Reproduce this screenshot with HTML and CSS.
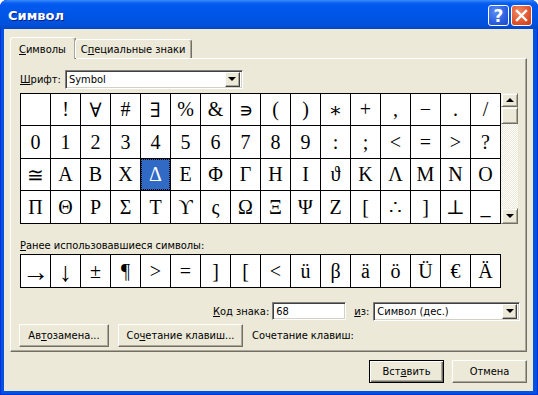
FILE: index.html
```html
<!DOCTYPE html>
<html lang="ru">
<head>
  <meta charset="UTF-8" />
  <title>Символ</title>
  <link rel="stylesheet" href="styles.css">
</head>
<body>
  <div class="window">
    <div class="titlebar">
      <span class="title">Символ</span>
      <div class="tb-buttons">
        <span class="tb-btn help">?</span>
        <span class="tb-btn close">
          <svg width="13" height="13" viewBox="0 0 13 13"><path d="M2 2 L11 11 M11 2 L2 11" stroke="#fff" stroke-width="2.4" stroke-linecap="square"/></svg>
        </span>
      </div>
    </div>

    <div class="dlg-body">
      <div class="tabs">
        <div class="tab active"><u>С</u>имволы</div>
        <div class="tab">С<u>п</u>ециальные знаки</div>
      </div>

      <div class="panel">
        <div class="font-row">
          <span class="lbl"><u>Ш</u>рифт:</span>
          <div class="combo font-combo">
            <span class="combo-text">Symbol</span>
            <span class="drop"><span class="tri-down"></span></span>
          </div>
        </div>

        <div class="chart">
          <div class="grid" id="grid"></div>
          <div class="scrollbar">
            <div class="sb-btn"><span class="tri-up"></span></div>
            <div class="sb-thumb"></div>
            <div class="sb-track"></div>
            <div class="sb-btn sb-down"><span class="tri-down"></span></div>
          </div>
        </div>

        <div class="recent-label"><u>Р</u>анее использовавшиеся символы:</div>
        <div class="recent" id="recent"></div>

        <div class="code-row">
          <span class="lbl"><u>К</u>од знака:</span>
          <div class="field code-field">68</div>
          <span class="lbl from-lbl"><u>и</u>з:</span>
          <div class="combo from-combo">
            <span class="combo-text">Символ (дес.)</span>
            <span class="drop"><span class="tri-down"></span></span>
          </div>
        </div>

        <div class="btn-row">
          <div class="btn btn-auto">Ав<u>т</u>озамена...</div>
          <div class="btn btn-keys">Со<u>ч</u>етание клавиш...</div>
          <span class="lbl keys-lbl">Сочетание клавиш:</span>
        </div>
      </div>

      <div class="footer">
        <div class="btn btn-main default">Вст<u>а</u>вить</div>
        <div class="btn btn-main">Отмена</div>
      </div>
    </div>
  </div>

  <script>
    const chars = [
      ' ', '!', '∀', '#', '∃', '%', '&', '∍', '(', ')', '∗', '+', ',', '−', '.', '/',
      '0', '1', '2', '3', '4', '5', '6', '7', '8', '9', ':', ';', '<', '=', '>', '?',
      '≅', 'Α', 'Β', 'Χ', 'Δ', 'Ε', 'Φ', 'Γ', 'Η', 'Ι', 'ϑ', 'Κ', 'Λ', 'Μ', 'Ν', 'Ο',
      'Π', 'Θ', 'Ρ', 'Σ', 'Τ', 'ϒ', 'ς', 'Ω', 'Ξ', 'Ψ', 'Ζ', '[', '∴', ']', '⊥', '_'
    ];
    const recentChars = ['→', '↓', '±', '¶', '>', '=', ']', '[', '<', 'ü', 'β', 'ä', 'ö', 'Ü', '€', 'Ä'];

    const grid = document.getElementById('grid');
    chars.forEach((c, i) => {
      const cell = document.createElement('div');
      cell.className = 'cell' + (i === 36 ? ' selected' : '');
      cell.textContent = c;
      grid.appendChild(cell);
    });

    const recent = document.getElementById('recent');
    recentChars.forEach(c => {
      const cell = document.createElement('div');
      cell.className = 'cell' + (c === '→' || c === '↓' ? ' arrow' : '');
      cell.textContent = c;
      recent.appendChild(cell);
    });
  </script>
</body>
</html>
```

FILE: styles.css
```css
body {
  margin: 0;
  background: #ffffff;
  font-family: "DejaVu Sans Condensed", "Liberation Sans", sans-serif;
  font-size: 11px;
  color: #000;
}

u {
  text-decoration: underline;
  text-underline-offset: 1px;
}

.window {
  width: 538px;
  height: 395px;
  background: #0053e1;
  border-radius: 7px 7px 0 0;
  box-shadow: inset 0 0 0 1px #0831d9;
  display: flex;
  flex-direction: column;
  box-sizing: border-box;
  overflow: hidden;
}

.titlebar {
  height: 29px;
  flex: none;
  display: flex;
  align-items: center;
  justify-content: space-between;
  padding: 0 6px 0 8px;
  background: linear-gradient(#3b8cfb 0, #0a5ff0 3px, #0058ee 6px, #0055e5 55%, #0050da 85%, #0046c8 100%);
  border-radius: 7px 7px 0 0;
}

.title {
  color: #fff;
  font-family: "DejaVu Sans", sans-serif;
  font-weight: bold;
  font-size: 13px;
  text-shadow: 1px 1px 0 #0a1e8c;
  padding-top: 1px;
}

.tb-buttons {
  display: flex;
  gap: 2px;
  padding-top: 2px;
}

.tb-btn {
  width: 21px;
  height: 21px;
  box-sizing: border-box;
  border: 1px solid #fff;
  border-radius: 3px;
  display: flex;
  align-items: center;
  justify-content: center;
  color: #fff;
}

.help {
  background: radial-gradient(circle at 35% 30%, #5d8cf5, #2a5fe0 60%, #1b47c7);
  font-family: "DejaVu Sans", sans-serif;
  font-size: 17px;
  font-weight: bold;
}

.close {
  background: radial-gradient(circle at 35% 30%, #f08a63, #e0542d 60%, #c63b16);
}

.dlg-body {
  flex: 1;
  margin: 0 5px 4px 4px;
  background: #ece9d8;
  display: flex;
  flex-direction: column;
}

.tabs {
  display: flex;
  align-items: flex-end;
  padding: 8px 0 0 7px;
  height: 21px;
  position: relative;
  z-index: 1;
}

.tab {
  height: 19px;
  box-sizing: border-box;
  padding: 3px 6px 0 5px;
  background: #ece9d8;
  border-top: 1px solid #fff;
  border-left: 1px solid #fff;
  border-right: 1px solid #716f64;
  box-shadow: inset -1px 0 0 #aca899;
  border-radius: 3px 3px 0 0;
}

.tab.active {
  height: 22px;
  padding: 5px 9px 0 8px;
  margin-right: -1px;
  margin-left: -1px;
  margin-bottom: -1px;
}

.panel {
  margin: 0 6px;
  height: 294px;
  box-sizing: border-box;
  border-top: 1px solid #fff;
  border-left: 1px solid #fff;
  border-right: 1px solid #716f64;
  border-bottom: 1px solid #716f64;
  box-shadow: inset -1px -1px 0 #aca899;
  padding: 10px 0 0 9px;
}

.lbl {
  white-space: nowrap;
}

.font-row {
  display: flex;
  align-items: center;
  gap: 4px;
  height: 20px;
}

.combo {
  height: 19px;
  box-sizing: border-box;
  background: #fff;
  border-top: 1px solid #808080;
  border-left: 1px solid #808080;
  border-right: 1px solid #fff;
  border-bottom: 1px solid #fff;
  box-shadow: inset 1px 1px 0 #404040, inset -1px -1px 0 #d4d0c8;
  display: flex;
  align-items: center;
  padding: 0 2px 0 3px;
}

.combo-text {
  flex: 1;
}

.font-combo {
  width: 178px;
}

.drop {
  width: 15px;
  height: 15px;
  box-sizing: border-box;
  background: #ece9d8;
  border-top: 1px solid #fff;
  border-left: 1px solid #fff;
  border-right: 1px solid #404040;
  border-bottom: 1px solid #404040;
  box-shadow: inset -1px -1px 0 #aca899;
  display: flex;
  align-items: center;
  justify-content: center;
}

.tri-down {
  width: 0;
  height: 0;
  border-left: 4px solid transparent;
  border-right: 4px solid transparent;
  border-top: 4px solid #000;
}

.tri-up {
  width: 0;
  height: 0;
  border-left: 4px solid transparent;
  border-right: 4px solid transparent;
  border-bottom: 4px solid #000;
}

.chart {
  display: flex;
  margin-top: 4px;
}

.grid,
.recent {
  display: grid;
  grid-template-columns: repeat(16, 29px);
  column-gap: 1px;
  row-gap: 1px;
  background: #000;
  border: 1px solid #000;
  width: fit-content;
  font-family: "Liberation Serif", "DejaVu Serif", serif;
  font-size: 20px;
}

.grid {
  grid-template-rows: 31px 32px 31px 32px;
}

.recent {
  grid-template-rows: 32px;
}

.cell {
  background: #fff;
  display: flex;
  align-items: center;
  justify-content: center;
  overflow: hidden;
}

.cell.arrow {
  font-family: "Liberation Serif", "DejaVu Serif", serif;
  font-size: 27px;
  padding-top: 3px;
}

.cell.selected {
  background: #316ac5;
  color: #fff;
  outline: 1px dotted #000;
  outline-offset: -1px;
}

.scrollbar {
  width: 17px;
  display: flex;
  flex-direction: column;
  height: 131px;
}

.sb-btn,
.sb-thumb {
  box-sizing: border-box;
  background: #ece9d8;
  border-top: 1px solid #f1efe2;
  border-left: 1px solid #f1efe2;
  border-right: 1px solid #716f64;
  border-bottom: 1px solid #716f64;
  box-shadow: inset 1px 1px 0 #fff, inset -1px -1px 0 #aca899;
  display: flex;
  align-items: center;
  justify-content: center;
}

.sb-btn {
  height: 14px;
}

.sb-down {
  height: 16px;
}

.sb-thumb {
  height: 17px;
}

.sb-track {
  flex: 1;
  background: repeating-conic-gradient(#fff 0 25%, #ece9d8 0 50%) 0 0 / 2px 2px;
}

.recent-label {
  margin-top: 15px;
  height: 13px;
}

.recent {
  margin-top: 2px;
}

.code-row {
  display: flex;
  align-items: center;
  margin-top: 14px;
  padding-left: 193px;
  height: 18px;
}

.field {
  height: 18px;
  box-sizing: border-box;
  background: #fff;
  border-top: 1px solid #808080;
  border-left: 1px solid #808080;
  border-right: 1px solid #fff;
  border-bottom: 1px solid #fff;
  box-shadow: inset 1px 1px 0 #404040, inset -1px -1px 0 #d4d0c8;
  padding: 2px 3px;
}

.code-field {
  width: 74px;
  margin-left: 3px;
}

.from-lbl {
  margin-left: 8px;
}

.from-combo {
  width: 147px;
  margin-left: 4px;
}

.btn-row {
  display: flex;
  align-items: center;
  margin-top: 4px;
  gap: 9px;
}

.btn {
  height: 23px;
  box-sizing: border-box;
  background: #ece9d8;
  border-top: 1px solid #fff;
  border-left: 1px solid #fff;
  border-right: 1px solid #716f64;
  border-bottom: 1px solid #716f64;
  box-shadow: inset -1px -1px 0 #aca899;
  display: flex;
  align-items: center;
  justify-content: center;
  white-space: nowrap;
}

.btn-auto {
  width: 90px;
  margin-left: -1px;
}

.btn-keys {
  width: 125px;
}

.footer {
  display: flex;
  justify-content: flex-end;
  gap: 8px;
  padding: 8px 6px 0 0;
}

.btn-main {
  width: 75px;
}

.btn.default {
  border: 1px solid #000;
  box-shadow: inset 1px 1px 0 #fff, inset -1px -1px 0 #716f64, inset -2px -2px 0 #aca899;
}
```
